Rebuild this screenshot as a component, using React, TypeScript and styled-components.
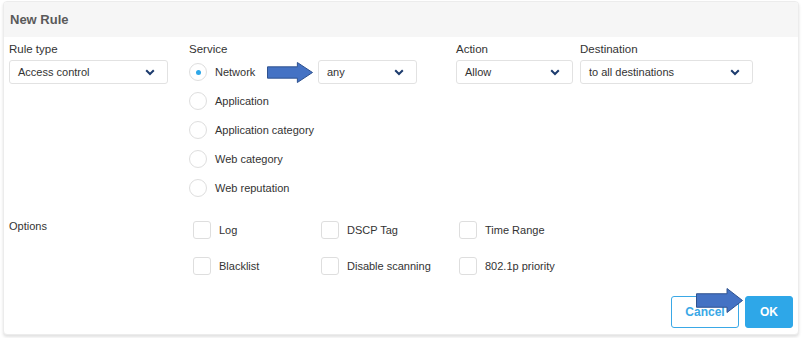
import styled, { createGlobalStyle } from 'styled-components';

const GlobalStyle = createGlobalStyle`
  body {
    margin: 0;
    background: #ffffff;
    font-family: 'Liberation Sans', Arial, sans-serif;
    font-size: 11px;
    color: #333;
  }
`;

const Chevron = () => (
  <svg width='10' height='7' viewBox='0 0 10 7'>
    <path d='M1.2 1.2 L5 5 L8.8 1.2' fill='none' stroke='#1d3c6e' strokeWidth='2' />
  </svg>
);

const BlueArrow = ({ width, height }: { width: number; height: number }) => {
  const headStart = width * 0.66;
  const top = height * 0.23;
  const bottom = height * 0.77;
  return (
    <svg width={width} height={height} viewBox={`0 0 ${width} ${height}`}>
      <path
        d={`M0.5 ${top} L${headStart} ${top} L${headStart} 0.5 L${width - 0.5} ${height / 2} L${headStart} ${height - 0.5} L${headStart} ${bottom} L0.5 ${bottom} Z`}
        fill='#4472c4'
        stroke='#2f528f'
        strokeWidth='1'
      />
    </svg>
  );
};

const services = ['Network', 'Application', 'Application category', 'Web category', 'Web reputation'];
const optionRows = [
  ['Log', 'DSCP Tag', 'Time Range'],
  ['Blacklist', 'Disable scanning', '802.1p priority'],
];

export default function App() {
  return (
    <Page>
      <GlobalStyle />
      <Card>
        <Header>New Rule</Header>
        <Body>
          <TopRow>
            <Column $width={180}>
              <Label>Rule type</Label>
              <Select $width={159}>
                <span>Access control</span>
                <Chevron />
              </Select>
            </Column>
            <Column $width={267}>
              <Label>Service</Label>
              <RadioList>
                {services.map((name, i) => (
                  <RadioRow key={name}>
                    <RadioItem $first={i === 0}>
                      <Radio $checked={i === 0} />
                      <span>{name}</span>
                    </RadioItem>
                    {i === 0 && (
                      <>
                        <Select $width={99}>
                          <span>any</span>
                          <Chevron />
                        </Select>
                        <ArrowMark $left={78} $top={2}>
                          <BlueArrow width={46} height={21} />
                        </ArrowMark>
                      </>
                    )}
                  </RadioRow>
                ))}
              </RadioList>
            </Column>
            <Column $width={124}>
              <Label>Action</Label>
              <Select $width={117}>
                <span>Allow</span>
                <Chevron />
              </Select>
            </Column>
            <Column $width={173}>
              <Label>Destination</Label>
              <Select $width={173}>
                <span>to all destinations</span>
                <Chevron />
              </Select>
            </Column>
          </TopRow>
          <OptionsRow>
            <OptionsLabel>Options</OptionsLabel>
            <OptionsGrid>
              {optionRows.flat().map((name) => (
                <CheckItem key={name}>
                  <CheckBox />
                  <span>{name}</span>
                </CheckItem>
              ))}
            </OptionsGrid>
          </OptionsRow>
          <Footer>
            <CancelButton>Cancel</CancelButton>
            <OkButton>OK</OkButton>
            <ArrowMark $left={25} $top={-8}>
              <BlueArrow width={47} height={25} />
            </ArrowMark>
          </Footer>
        </Body>
      </Card>
    </Page>
  );
}

const Page = styled.div`
  padding: 1px 4px 4px 3px;
`;

const Card = styled.div`
  width: 794px;
  height: 332px;
  border: 1px solid #ececec;
  border-radius: 4px;
  box-shadow: 0 2px 3px rgba(0, 0, 0, 0.12);
  background: #fff;
  display: flex;
  flex-direction: column;
  overflow: hidden;
`;

const Header = styled.div`
  height: 35px;
  background: #f6f6f6;
  padding-left: 6px;
  display: flex;
  align-items: center;
  font-size: 13px;
  font-weight: bold;
  color: #5a5a5a;
`;

const Body = styled.div`
  flex: 1;
  padding: 5px 5px 6px 5px;
  display: flex;
  flex-direction: column;
`;

const TopRow = styled.div`
  display: flex;
`;

const Column = styled.div<{ $width: number }>`
  width: ${(p) => p.$width}px;
  display: flex;
  flex-direction: column;
  gap: 4px;
`;

const Label = styled.div`
  height: 14px;
  line-height: 14px;
  font-size: 11.5px;
  color: #333;
`;

const Select = styled.div<{ $width: number }>`
  width: ${(p) => p.$width}px;
  height: 24px;
  box-sizing: border-box;
  border: 1px solid #e2e2e2;
  border-radius: 3px;
  background: #fff;
  padding: 0 12px 0 8px;
  display: flex;
  align-items: center;
  justify-content: space-between;
  color: #333;
`;

const RadioList = styled.div`
  display: flex;
  flex-direction: column;
  gap: 5px;
`;

const RadioRow = styled.div`
  position: relative;
  display: flex;
  align-items: center;
  height: 24px;
`;

const RadioItem = styled.div<{ $first?: boolean }>`
  width: ${(p) => (p.$first ? '129px' : 'auto')};
  display: flex;
  align-items: center;
  gap: 8px;
`;

const Radio = styled.span<{ $checked?: boolean }>`
  width: 18px;
  height: 18px;
  box-sizing: border-box;
  border: 1px solid #dedede;
  border-radius: 50%;
  display: flex;
  align-items: center;
  justify-content: center;
  &::after {
    content: '';
    width: 5px;
    height: 5px;
    border-radius: 50%;
    background: ${(p) => (p.$checked ? '#2ea7e8' : 'transparent')};
  }
`;

const ArrowMark = styled.div<{ $left: number; $top: number }>`
  position: absolute;
  left: ${(p) => p.$left}px;
  top: ${(p) => p.$top}px;
  line-height: 0;
  pointer-events: none;
`;

const OptionsRow = styled.div`
  display: flex;
  margin-top: 21px;
`;

const OptionsLabel = styled.div`
  width: 184px;
  margin-top: -1px;
  line-height: 13px;
`;

const OptionsGrid = styled.div`
  display: grid;
  grid-template-columns: 128px 138px 120px;
  row-gap: 18px;
`;

const CheckItem = styled.div`
  display: flex;
  align-items: center;
  gap: 8px;
  height: 18px;
`;

const CheckBox = styled.span`
  width: 18px;
  height: 18px;
  box-sizing: border-box;
  border: 1px solid #dedede;
  border-radius: 3px;
`;

const Footer = styled.div`
  position: relative;
  margin-top: auto;
  align-self: flex-end;
  display: flex;
  gap: 6px;
`;

const ButtonBase = styled.button`
  height: 32px;
  box-sizing: border-box;
  border-radius: 3px;
  font-family: 'Liberation Sans', Arial, sans-serif;
  font-size: 12px;
  font-weight: bold;
  cursor: pointer;
`;

const CancelButton = styled(ButtonBase)`
  width: 68px;
  background: #fff;
  border: 1px solid #3aa8e6;
  color: #3aa8e6;
`;

const OkButton = styled(ButtonBase)`
  width: 48px;
  background: #2ea7e8;
  border: 1px solid #2ea7e8;
  color: #fff;
`;
